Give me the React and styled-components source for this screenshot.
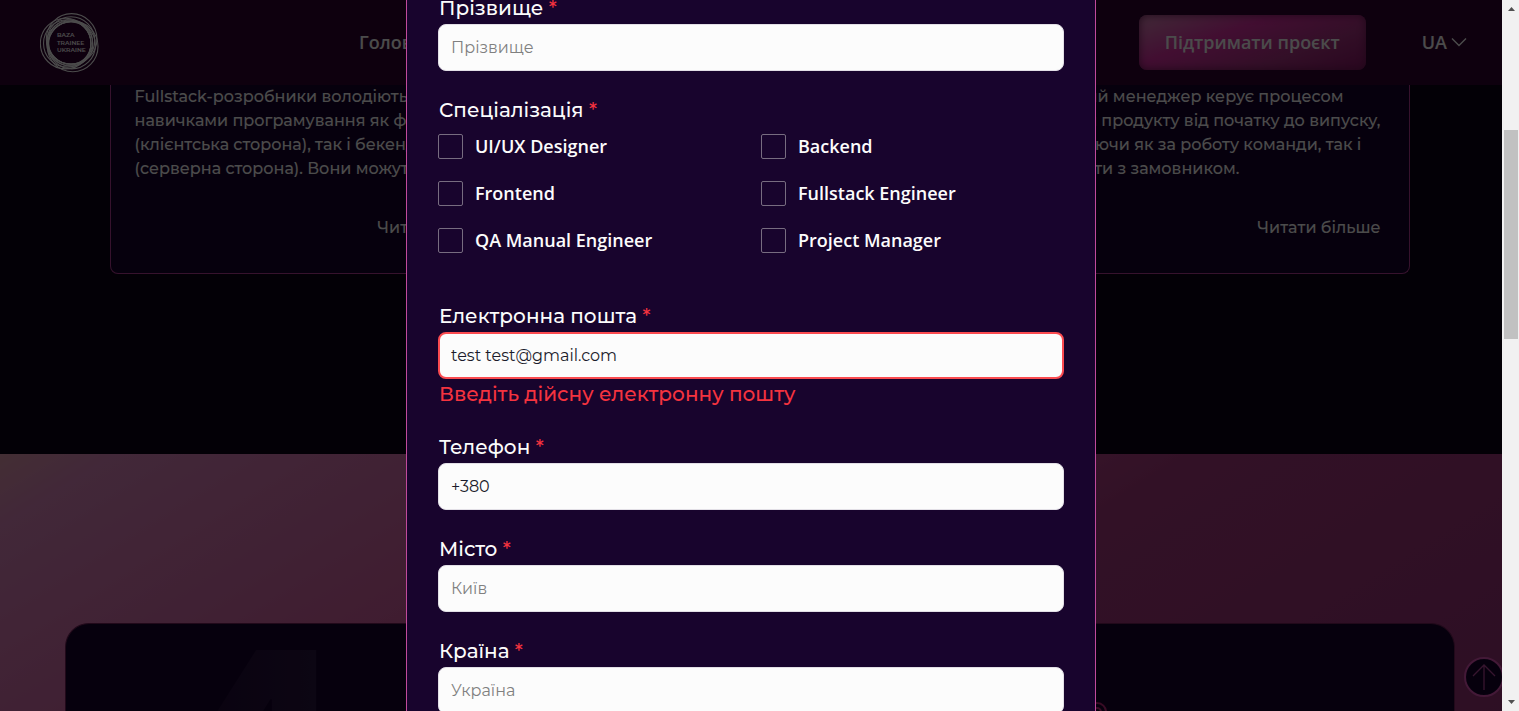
import React from 'react';
import styled, { createGlobalStyle } from 'styled-components';

const TEXT = "'Montserrat', 'Inter', 'Liberation Sans', sans-serif";
const HEADING = "'Open Sans', 'Noto Sans', sans-serif";

const GlobalStyle = createGlobalStyle`
  *, *::before, *::after { box-sizing: border-box; }
  html, body, #root { height: 100%; }
  body {
    margin: 0;
    overflow: hidden;
    background: #0a0217;
    color: #fcfcfc;
    font-family: ${TEXT};
    font-size: 16px;
    line-height: 24px;
  }
`;

const Page = styled.div`
  height: 100vh;
  overflow: hidden;
  display: flex;
  flex-direction: column;
`;

const Header = styled.header`
  flex: none;
  height: 85px;
  padding: 0 52px 0 40px;
  display: flex;
  align-items: center;
  background: #300030;
  font: 600 18px/24px ${HEADING};
`;

const LogoLink = styled.a`
  display: block;
  width: 60px;
  height: 60px;
`;

const Nav = styled.nav`
  flex: 1;
  padding: 0 0 2px 259px;
`;

const NavLink = styled.a`
  color: inherit;
  text-decoration: none;
`;

const SupportButton = styled.button`
  height: 55px;
  padding: 0 26px 2px;
  border: 0;
  border-radius: 8px;
  color: inherit;
  font: inherit;
  background: linear-gradient(160deg, #d88cba 0%, #dc2fa5 36%, #a83282 70%, #8b1468 100%);
  box-shadow: inset 0 0 8px #6b1a55;
`;

const LanguageButton = styled.button`
  display: flex;
  align-items: center;
  gap: 4px;
  margin-left: 56px;
  padding: 0 0 2px;
  border: 0;
  background: none;
  color: inherit;
  font: inherit;
`;

const Roles = styled.section`
  flex: none;
  width: 100%;
  max-width: 1300px;
  height: 369px;
  margin: 0 auto;
`;

const RoleRow = styled.div`
  display: flex;
  justify-content: space-between;
`;

const RoleCard = styled.article`
  width: calc((100% - 40px) / 3);
  height: 189px;
  padding: 0 28px 0 24px;
  display: flex;
  flex-direction: column;
  gap: 35px;
  border: 1px solid #b53c96;
  border-top: 0;
  border-radius: 0 0 8px 8px;
  background: #17022e;
  font-weight: 500;
`;

const RoleText = styled.p`
  height: 96px;
  margin: 0;
  white-space: nowrap;
`;

const MoreLink = styled.a`
  align-self: flex-end;
  color: inherit;
  text-decoration: none;
`;

const Steps = styled.section`
  flex: 1;
  min-height: 258px;
  padding: 169px 64px 0 65px;
  background: linear-gradient(148deg, #e29aae 0%, #dc86be 6%, #d2559a 42%, #a83a80 62%, #98327a 100%);
`;

const StepPanel = styled.div`
  height: 400px;
  padding: 0 345px 0 110px;
  display: flex;
  justify-content: space-between;
  align-items: flex-start;
  border: 1px solid #6e2058;
  border-bottom: 0;
  border-radius: 24px 24px 0 0;
  background: #17022e;
`;

const StepNumber = styled.span`
  font: 900 240px/228px 'Inter', sans-serif;
  color: transparent;
  background: linear-gradient(90deg, #1e0834, #2a1440 80%);
  background-clip: text;
`;

const StepMark = styled.svg`
  margin-top: 76px;
`;

const ToTop = styled.a`
  position: fixed;
  right: 15px;
  bottom: 14px;
  width: 40px;
  height: 40px;
  display: grid;
  place-items: center;
  border: 2px solid #e055b8;
  border-radius: 50%;
  background: #17022e;
  color: #b8489e;
`;

const Layer = styled.div`
  position: fixed;
  inset: 0;
  display: flex;
`;

const Backdrop = styled.div`
  flex: 1;
  display: flex;
  justify-content: center;
  overflow: hidden;
  background: rgba(0, 0, 0, 0.7);
`;

const Dialog = styled.div`
  width: 100%;
  max-width: 690px;
  padding: 0 31px;
  border: solid #c04a9c;
  border-width: 0 1px;
  background: #18042d;
`;

const Form = styled.form`
  margin-top: -4px;
  display: flex;
  flex-direction: column;
  gap: 27px;
`;

const Field = styled.div`
  display: flex;
  flex-direction: column;
  gap: 4px;
  font-size: 20px;
`;

const Label = styled.label`
  padding-left: 1px;
  font-weight: 500;
`;

const Required = styled.span`
  color: #f5333f;
`;

const TextInput = styled.input`
  width: 100%;
  height: 47px;
  padding: 0 ${(p) => (p.$invalid ? 11 : 12)}px;
  border: ${(p) => (p.$invalid ? '2px solid #fb4b50' : '1px solid #e2dfe6')};
  border-radius: 8px;
  outline: 0;
  background: #fcfcfc;
  color: #1b1b2b;
  font: 400 16px/24px ${TEXT};
  &::placeholder { color: #808080; opacity: 1; }
`;

const ErrorText = styled.span`
  padding-left: 1px;
  margin-bottom: 3px;
  line-height: 22px;
  color: #f5333f;
  font-weight: 500;
`;

const Choices = styled.fieldset`
  margin: 0 0 24px;
  padding: 0;
  border: 0;
  min-width: 0;
`;

const Legend = styled.legend`
  padding: 0 0 0 1px;
  margin-bottom: 12px;
  font-size: 20px;
  font-weight: 500;
`;

const ChoiceGrid = styled.div`
  display: grid;
  grid-template-columns: 1fr 1fr;
  gap: 22px 20px;
`;

const Choice = styled.label`
  display: flex;
  align-items: center;
  gap: 12px;
  height: 25px;
  font: 600 18px/25px ${HEADING};
`;

const Checkbox = styled.input`
  appearance: none;
  width: 25px;
  height: 25px;
  margin: 0;
  border: 1px solid #776c80;
  border-radius: 2px;
`;

const ScrollTrack = styled.div`
  flex: none;
  width: 17px;
  padding: 7px 1px 7px 2px;
  display: flex;
  flex-direction: column;
  align-items: center;
  background: #f1f1f1;
`;

const ScrollThumb = styled.div`
  width: 100%;
  height: 30%;
  margin: 119px 0 auto;
  background: #c1c1c1;
`;

const ScrollArrow = styled.svg`
  display: block;
  flex: none;
`;

const RING_ANGLES = [172, 292, 52];
const RING_STEPS = [
  { r: 25.3, offset: 4.4 },
  { r: 23.7, offset: 2.8 },
  { r: 22.1, offset: 1.2 },
];

function Logo() {
  return (
    <svg width="60" height="60" viewBox="0 0 60 60" fill="none" aria-hidden="true">
      {RING_ANGLES.map((deg) => {
        const a = (deg * Math.PI) / 180;
        return RING_STEPS.map(({ r, offset }) => (
          <circle
            key={`${deg}-${r}`}
            cx={30 + offset * Math.cos(a)}
            cy={30 + offset * Math.sin(a)}
            r={r}
            stroke="#fcfcfc"
            strokeWidth="1.1"
          />
        ));
      })}
      <g fill="#fcfcfc" fontFamily="Montserrat, Inter, sans-serif" fontSize="6">
        <text x="17" y="24">BAZA</text>
        <text x="17" y="32">TRAINEE</text>
        <text x="17" y="39">UKRAINE</text>
      </g>
    </svg>
  );
}

function TextField({ id, label, error, ...rest }) {
  return (
    <Field>
      <Label htmlFor={id}>
        {label} <Required>*</Required>
      </Label>
      <TextInput id={id} $invalid={Boolean(error)} {...rest} />
      {error && <ErrorText>{error}</ErrorText>}
    </Field>
  );
}

const SPECIALIZATIONS = [
  'UI/UX Designer',
  'Backend',
  'Frontend',
  'Fullstack Engineer',
  'QA Manual Engineer',
  'Project Manager',
];

const ROLES = [
  [
    'Fullstack-розробники володіють',
    'навичками програмування як фронтенд',
    '(клієнтська сторона), так і бекенд',
    '(серверна сторона). Вони можуть',
  ],
  [
    'Проєктний менеджер керує процесом',
    'розробки продукту від початку до випуску,',
    'відповідаючи як за роботу команди, так і',
    'за контакти з замовником.',
  ],
];

export default function App() {
  return (
    <>
      <GlobalStyle />
      <Page>
        <Header>
          <LogoLink href="#" aria-label="Baza Trainee Ukraine">
            <Logo />
          </LogoLink>
          <Nav>
            <NavLink href="#">Головна</NavLink>
          </Nav>
          <SupportButton type="button">Підтримати проєкт</SupportButton>
          <LanguageButton type="button">
            UA
            <svg width="16" height="10" viewBox="0 0 16 10" fill="none" stroke="currentColor" strokeWidth="1.4" aria-hidden="true">
              <path d="M1 1.5l7 7 7-7" />
            </svg>
          </LanguageButton>
        </Header>
        <Roles>
          <RoleRow>
            {ROLES.map((lines) => (
              <RoleCard key={lines[0]}>
                <RoleText>
                  {lines.map((line) => (
                    <React.Fragment key={line}>
                      {line}
                      <br />
                    </React.Fragment>
                  ))}
                </RoleText>
                <MoreLink href="#">Читати більше</MoreLink>
              </RoleCard>
            ))}
          </RoleRow>
        </Roles>
        <Steps>
          <StepPanel>
            <StepNumber>4</StepNumber>
            <StepMark width="24" height="24" viewBox="0 0 24 24" fill="none" stroke="#c0287e" strokeWidth="2" aria-hidden="true">
              <circle cx="12" cy="12" r="9" />
              <circle cx="12" cy="12" r="4" />
            </StepMark>
          </StepPanel>
        </Steps>
        <ToTop href="#" aria-label="Вгору">
          <svg width="24" height="28" viewBox="0 0 24 28" fill="none" stroke="currentColor" strokeWidth="1.3" aria-hidden="true">
            <path d="M12 27V2M1 13L12 2l11 11" />
          </svg>
        </ToTop>
      </Page>
      <Layer>
        <Backdrop>
          <Dialog role="dialog" aria-modal="true" aria-label="Анкета">
            <Form noValidate>
              <TextField id="surname" label="Прізвище" placeholder="Прізвище" />
              <Choices>
                <Legend>
                  Спеціалізація <Required>*</Required>
                </Legend>
                <ChoiceGrid>
                  {SPECIALIZATIONS.map((name) => (
                    <Choice key={name}>
                      <Checkbox type="checkbox" name="specialization" value={name} />
                      {name}
                    </Choice>
                  ))}
                </ChoiceGrid>
              </Choices>
              <TextField
                id="email"
                label="Електронна пошта"
                defaultValue="test test@gmail.com"
                error="Введіть дійсну електронну пошту"
              />
              <TextField id="phone" type="tel" label="Телефон" defaultValue="+380" />
              <TextField id="city" label="Місто" placeholder="Київ" />
              <TextField id="country" label="Країна" placeholder="Україна" />
            </Form>
          </Dialog>
        </Backdrop>
        <ScrollTrack aria-hidden="true">
          <ScrollArrow width="7" height="4" viewBox="0 0 7 4" fill="#505050">
            <path d="M3.5 0L7 4H0z" />
          </ScrollArrow>
          <ScrollThumb />
          <ScrollArrow width="7" height="4" viewBox="0 0 7 4" fill="#505050">
            <path d="M0 0h7L3.5 4z" />
          </ScrollArrow>
        </ScrollTrack>
      </Layer>
    </>
  );
}
